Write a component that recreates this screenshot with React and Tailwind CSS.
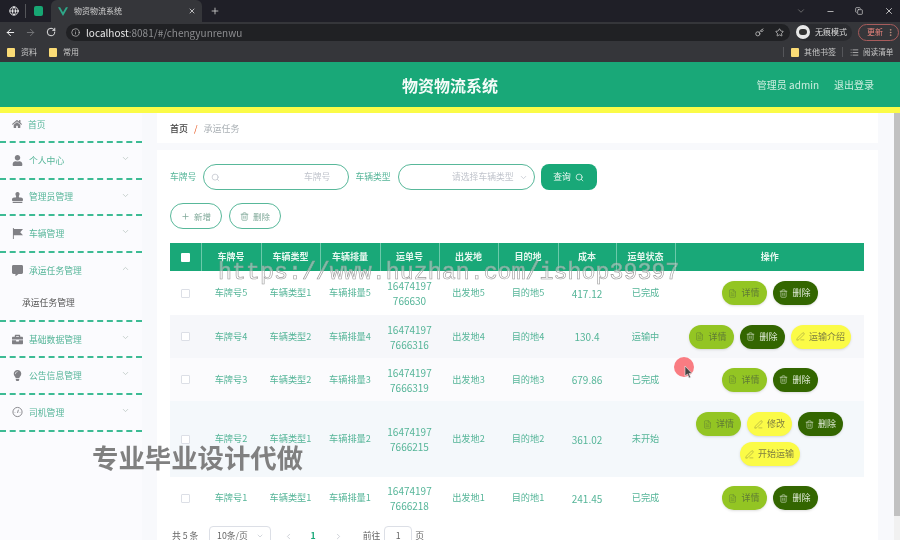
import { ChevronDown, ChevronUp, Search, Plus, Trash2, FileText, PenLine, Globe, ArrowLeft, ArrowRight, RotateCw, Info, Key, Star, X, Minus, Copy, MoreVertical, List, ChevronLeft, ChevronRight } from "lucide-react";
import { FaHome, FaUser, FaStamp, FaCommentAlt, FaBriefcase, FaLightbulb } from "react-icons/fa";

const FlagIcon = () => (
    <svg width="11" height="11" viewBox="0 0 12 12" fill="currentColor">
        <path d="M1 0h1v12H1zM2 1h10L9 4.500 12 8H2z" />
    </svg>
);

const DialIcon = () => (
    <svg width="12" height="12" viewBox="0 0 12 12" fill="none" stroke="currentColor">
        <circle cx="6" cy="6" r="5" />
        <path d="M6 7l1-3.500M3 6.500h.5M8.500 6.500H9" />
    </svg>
);

const menu = [
    { name: "个人中心", icon: <FaUser size={11} /> },
    { name: "管理员管理", icon: <FaStamp size={11} /> },
    { name: "车辆管理", icon: <FlagIcon /> },
    { name: "承运任务管理", icon: <FaCommentAlt size={11} />, open: true },
    { name: "基础数据管理", icon: <FaBriefcase size={11} /> },
    { name: "公告信息管理", icon: <FaLightbulb size={11} /> },
    { name: "司机管理", icon: <DialIcon /> },
];

const rows = [
    { no: 5, type: 1, bill: ["16474197", "766630"], cost: "417.12", status: "已完成", h: "h-[44px]", bg: "bg-white", btns: ["详情", "删除"] },
    { no: 4, type: 2, bill: ["16474197", "7666316"], cost: "130.4", status: "运输中", h: "h-[43px]", bg: "bg-[#f6f7fa]", btns: ["详情", "删除", "运输介绍"] },
    { no: 3, type: 2, bill: ["16474197", "7666319"], cost: "679.86", status: "已完成", h: "h-[43px]", bg: "bg-[#fbfbfd]", btns: ["详情", "删除"] },
    { no: 2, type: 1, bill: ["16474197", "7666215"], cost: "361.02", status: "未开始", h: "h-[76px]", bg: "bg-[#f4f8fb]", btns: ["详情", "修改", "删除", "开始运输"] },
    { no: 1, type: 1, bill: ["16474197", "7666218"], cost: "241.45", status: "已完成", h: "h-[42px]", bg: "bg-white", btns: ["详情", "删除"] },
];

const heads = ["车牌号", "车辆类型", "车辆排量", "运单号", "出发地", "目的地", "成本", "运单状态", "操作"];

function ActionButton({ label }) {
    if (label === "详情") {
        return (
            <button className="flex h-6 w-[45px] items-center justify-center gap-1 rounded-full bg-[#93c523] text-[9px] text-[#5f7a35] shadow-sm">
                <FileText size={9} strokeWidth={1.2} />详情
            </button>
        );
    }
    if (label === "删除") {
        return (
            <button className="flex h-6 w-[45px] items-center justify-center gap-1 rounded-full bg-[#336600] text-[9px] text-[#dfead6] shadow-sm">
                <Trash2 size={9} strokeWidth={1.5} />删除
            </button>
        );
    }
    return (
        <button className={`flex h-6 items-center justify-center gap-1 rounded-full bg-[#fbfb47] text-[9px] text-[#808040] shadow-sm ${label === "修改" ? "w-[45px]" : "w-[60px]"}`}>
            <PenLine size={9} strokeWidth={1.2} />{label}
        </button>
    );
}

function BrowserBar() {
    return (
        <div className="h-[62px] shrink-0 bg-[#35363a] text-[#c8c8c8]">
            <div className="flex h-[22px] items-center bg-[#1f1f27]">
                <Globe size={10} className="ml-[9px] text-white" />
                <div className="ml-[6px] h-[14px] w-px bg-[#55565a]" />
                <div className="ml-[8px] h-[10px] w-[9px] rounded-[2px] bg-[#17a673]" />
                <div className="ml-[8px] flex h-[22px] w-[151px] items-center rounded-t-md bg-[#35363a] pl-[7px]">
                    <svg width="10" height="9" viewBox="0 0 24 21">
                        <path d="M0 0h5l7 12L19 0h5L12 21z" fill="#2fa889" />
                    </svg>
                    <span className="ml-[6px] text-[8px] text-[#d0d0d0]">物资物流系统</span>
                    <X size={8} className="ml-[66px] text-white" />
                </div>
                <Plus size={10} className="ml-[8px] text-[#d0d0d0]" />
                <div className="ml-auto flex items-center">
                    <ChevronDown size={10} className="mr-[20px] text-[#777]" />
                    <Minus size={9} className="mr-[20px] text-[#ddd]" />
                    <Copy size={8} className="mr-[21px] text-[#ddd]" />
                    <X size={10} className="mr-[6px] text-[#ddd]" />
                </div>
            </div>
            <div className="flex h-[20px] items-center">
                <ArrowLeft size={11} className="ml-[5px] text-white" />
                <ArrowRight size={11} className="ml-[9px] text-[#77787b]" />
                <RotateCw size={10} className="ml-[10px] text-white" />
                <div className="ml-[10px] flex h-[17px] w-[724px] items-center rounded-full bg-[#202124] pl-[5px]">
                    <Info size={9} className="text-[#bbb]" />
                    <span className="ml-[6px] text-[10px] text-[#e8e8e8]">localhost</span>
                    <span className="text-[10px] text-[#8d8e91]">:8081/#/chengyunrenwu</span>
                    <Key size={9} className="ml-auto text-[#ccc]" />
                    <Star size={9} className="ml-[11px] mr-[6px] text-[#ccc]" />
                </div>
                <div className="ml-[6px] flex h-[17px] w-[56px] items-center rounded-full bg-[#2a2b2f]">
                    <div className="flex h-[14px] w-[14px] items-center justify-center rounded-full bg-[#e8e8e8]">
                        <div className="h-[6px] w-[8px] rounded-sm bg-[#333]" />
                    </div>
                    <span className="ml-[5px] text-[8px] text-[#ddd]">无痕模式</span>
                </div>
                <div className="ml-[6px] flex h-[17px] w-[41px] items-center rounded-full border border-[#a85c5c] pl-[8px]">
                    <span className="text-[8px] text-[#e8837c]">更新</span>
                    <MoreVertical size={9} className="ml-[3px] text-[#c98]" />
                </div>
            </div>
            <div className="flex h-[20px] items-center text-[8px]">
                <div className="ml-[7px] h-[9px] w-[8px] rounded-[1px] bg-[#fbdc76]" />
                <span className="ml-[6px]">资料</span>
                <div className="ml-[12px] h-[9px] w-[8px] rounded-[1px] bg-[#fbdc76]" />
                <span className="ml-[6px]">常用</span>
                <div className="ml-[704px] h-[10px] w-px bg-[#55565a]" />
                <div className="ml-[7px] h-[9px] w-[8px] rounded-[1px] bg-[#fbdc76]" />
                <span className="ml-[5px]">其他书签</span>
                <div className="ml-[6px] h-[10px] w-px bg-[#55565a]" />
                <List size={9} className="ml-[7px]" />
                <span className="ml-[4px] whitespace-nowrap text-[7.6px]">阅读清单</span>
            </div>
        </div>
    );
}

function Sidebar() {
    return (
        <div className="w-[142px] shrink-0 bg-[#fbfbfe] text-[8.8px] text-[#55b598]">
            <div className="flex h-[30px] items-start border-b-2 border-dashed border-[#3dbb94] pl-[12px] pt-[5px]">
                <FaHome size={10} className="mt-[1px] text-[#808085]" />
                <span className="ml-[6px]">首页</span>
            </div>
            {menu.map((item) => (
                <div key={item.name} className="border-b-2 border-dashed border-[#3dbb94]">
                    <div className="flex h-[34.7px] items-center pl-[12px] pr-[12px]">
                        <span className="flex w-[11px] justify-center text-[#808085]">{item.icon}</span>
                        <span className="ml-[6px]">{item.name}</span>
                        {item.open
                            ? <ChevronUp size={9} className="ml-auto mb-1 text-[#b8c4c0]" />
                            : <ChevronDown size={9} className="ml-auto mb-1 text-[#b8c4c0]" />}
                    </div>
                    {item.open && <div className="flex h-[32px] items-center pl-[22px] pb-[3px] text-[#555]">承运任务管理</div>}
                </div>
            ))}
        </div>
    );
}

function TaskTable() {
    return (
        <table className="w-[694px] table-fixed border-collapse text-center text-[9.2px] text-[#55b598]">
            <colgroup>
                <col className="w-[31px]" />
                <col className="w-[60px]" />
                <col className="w-[59px]" />
                <col className="w-[60px]" />
                <col className="w-[59px]" />
                <col className="w-[59px]" />
                <col className="w-[60px]" />
                <col className="w-[58px]" />
                <col className="w-[59px]" />
                <col />
            </colgroup>
            <thead>
                <tr className="h-[28px] bg-[#19a878] text-[9px] font-bold text-[#e8f7f0]">
                    <th className="border-r border-[#6cc9aa]">
                        <div className="mx-auto h-[9px] w-[9px] rounded-[1px] bg-white" />
                    </th>
                    {heads.map((h, i) => (
                        <th key={h} className={i < heads.length - 1 ? "border-r border-[#6cc9aa] font-bold" : "font-bold"}>{h}</th>
                    ))}
                </tr>
            </thead>
            <tbody>
                {rows.map((r) => (
                    <tr key={r.no} className={`${r.h} ${r.bg}`}>
                        <td>
                            <div className="mx-auto h-[9px] w-[9px] rounded-[1px] border border-[#dcdfe6] bg-white" />
                        </td>
                        <td>车牌号{r.no}</td>
                        <td>车辆类型{r.type}</td>
                        <td>车辆排量{r.no}</td>
                        <td className="text-[10px] leading-[15px]">{r.bill[0]}<br />{r.bill[1]}</td>
                        <td>出发地{r.no}</td>
                        <td>目的地{r.no}</td>
                        <td className="text-[10px]">{r.cost}</td>
                        <td>{r.status}</td>
                        <td>
                            <div className="flex flex-wrap justify-center gap-[6px] px-[10px]">
                                {r.btns.map((b) => <ActionButton key={b} label={b} />)}
                            </div>
                        </td>
                    </tr>
                ))}
            </tbody>
        </table>
    );
}

export default function App() {
    return (
        <div className="relative flex h-[540px] w-[900px] flex-col overflow-hidden bg-[#f8f9fc] blur-[0.3px] font-['Noto_Sans_CJK_SC','Noto_Sans',sans-serif]">
            <BrowserBar />
            <div className="relative flex h-[51px] shrink-0 items-center justify-end border-b-[6px] border-[#fbfb47] bg-[#19a878] pr-[26px] text-[10px] text-[#cdeee0]">
                <span className="mr-[15px]">管理员 admin</span>
                <span>退出登录</span>
                <span className="absolute left-1/2 -translate-x-1/2 text-[16px] font-bold text-[#f4fbf8]">物资物流系统</span>
            </div>
            <div className="flex min-h-0 flex-1">
                <Sidebar />
                <div className="ml-[15px] w-[721px] shrink-0">
                    <div className="flex h-[30px] items-center bg-white pl-[13px] pt-[2px] text-[9px]">
                        <span className="font-medium text-[#444]">首页</span>
                        <span className="mx-[6px] text-[#e8541c]">/</span>
                        <span className="text-[#aab0b5]">承运任务</span>
                    </div>
                    <div className="mt-[7px] bg-white pl-[13px] pt-[14px]">
                        <div className="flex h-[26px] items-center text-[8.8px] text-[#55b598]">
                            <span>车牌号</span>
                            <div className="ml-[7px] flex h-[26px] w-[146px] items-center rounded-full border border-[#58b89a] pl-[7px] pr-[18px]">
                                <Search size={9} className="text-[#c0c4cc]" />
                                <span className="ml-auto text-[#c0c4cc]">车牌号</span>
                            </div>
                            <span className="ml-[6px]">车辆类型</span>
                            <div className="ml-[7px] flex h-[26px] w-[137px] items-center rounded-full border border-[#58b89a] pr-[6px]">
                                <span className="ml-auto text-[#c0c4cc]">请选择车辆类型</span>
                                <ChevronDown size={9} className="ml-[5px] text-[#c0c4cc]" />
                            </div>
                            <button className="ml-[6px] flex h-[26px] w-[56px] items-center justify-center gap-1 rounded-lg bg-[#19a878] text-[#eef9f4]">
                                查询<Search size={9} />
                            </button>
                        </div>
                        <div className="mt-[13px] flex gap-[7px] text-[8.5px] text-[#7fa898]">
                            <button className="flex h-[26px] w-[52px] items-center justify-center gap-1 rounded-full border border-[#58b89a] bg-white">
                                <Plus size={9} />新增
                            </button>
                            <button className="flex h-[26px] w-[52px] items-center justify-center gap-1 rounded-full border border-[#58b89a] bg-white">
                                <Trash2 size={9} />删除
                            </button>
                        </div>
                        <div className="mt-[14px]"><TaskTable /></div>
                        <div className="mt-[7px] flex h-[20px] items-center text-[8.8px] text-[#666]">
                            <span className="ml-[2px]">共 5 条</span>
                            <div className="ml-[11px] flex h-[20px] w-[62px] items-center justify-center gap-2 rounded-sm border border-[#dcdfe6]">
                                10条/页<ChevronDown size={8} className="text-[#c0c4cc]" />
                            </div>
                            <ChevronLeft size={9} className="ml-[13px] text-[#c0c4cc]" />
                            <span className="ml-[17px] font-bold text-[#19a878]">1</span>
                            <ChevronRight size={9} className="ml-[18px] text-[#c0c4cc]" />
                            <span className="ml-[20px]">前往</span>
                            <div className="ml-[4px] flex h-[20px] w-[28px] items-center justify-center rounded-sm border border-[#dcdfe6]">1</div>
                            <span className="ml-[3px]">页</span>
                        </div>
                    </div>
                </div>
                <div className="ml-auto flex w-[6px] shrink-0 flex-col bg-[#f1f1f1]">
                    <div className="h-[403px] bg-[#c1c1c1]" />
                </div>
            </div>

            {/* watermarks and recorded pointer sit over the page */}
            <span className="pointer-events-none absolute left-[218px] top-[257px] font-['Liberation_Mono',monospace] text-[23.3px] leading-[32px] whitespace-nowrap text-white/40 [-webkit-text-stroke:0.6px_#999999]">https://www.huzhan.com/ishop39397</span>
            <span className="pointer-events-none absolute left-[92px] top-[438px] text-[26.4px] leading-[38px] font-bold whitespace-nowrap text-[#808080]">专业毕业设计代做</span>
            <div className="pointer-events-none absolute left-[674px] top-[357px] h-5 w-5 rounded-full bg-[#f97c82]" />
            <svg className="pointer-events-none absolute left-[684px] top-[365px]" width="9" height="14" viewBox="0 0 9 14">
                <path d="M1 1v10l2.500-2 1.500 4 1.600-.7L5 8.500h3z" fill="#444" stroke="#eee" strokeWidth="0.6" />
            </svg>
        </div>
    );
}
